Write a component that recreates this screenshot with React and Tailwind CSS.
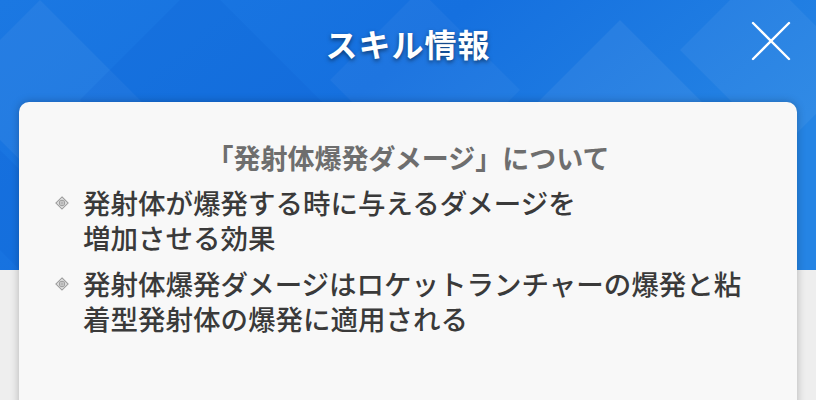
import React from "react";

const font = { fontFamily: '"Noto Sans CJK JP", "Noto Sans", sans-serif' };

function BulletMark() {
  return (
    <svg width="14" height="14" viewBox="0 0 14 14" className="shrink-0">
      <path d="M7 1 L13 7 L7 13 L1 7 Z" fill="none" stroke="#a0a0a0" strokeWidth="1.2" />
      <circle cx="7" cy="7" r="2.6" fill="none" stroke="#a0a0a0" strokeWidth="1.1" />
      <path d="M7 3.5 V10.5 M3.5 7 H10.5" stroke="#a0a0a0" strokeWidth="1" />
    </svg>
  );
}

function HeaderPattern() {
  return (
    <svg className="absolute inset-0 h-full w-full" viewBox="0 0 816 270" preserveAspectRatio="none">
      <defs>
        <linearGradient id="bg" x1="0" y1="0" x2="1" y2="0.4">
          <stop offset="0" stopColor="#1b78e2" />
          <stop offset="0.5" stopColor="#1570df" />
          <stop offset="1" stopColor="#2584e4" />
        </linearGradient>
      </defs>
      <rect width="816" height="270" fill="url(#bg)" />
      <path d="M40 0 L150 110 L60 200 L-50 90 Z" fill="#ffffff" opacity="0.05" />
      <path d="M200 -20 L330 110 L210 230 L80 100 Z" fill="#0a5fd0" opacity="0.18" />
      <path d="M420 -10 L520 90 L430 180 L330 80 Z" fill="#ffffff" opacity="0.04" />
      <path d="M620 20 L720 120 L630 210 L530 110 Z" fill="#ffffff" opacity="0.06" />
      <path d="M760 -30 L860 70 L780 150 L680 50 Z" fill="#ffffff" opacity="0.05" />
      <path d="M0 150 L80 230 L30 280 L-50 200 Z" fill="#0a5fd0" opacity="0.2" />
    </svg>
  );
}

export default function App() {
  return (
    <div className="relative h-[400px] w-[816px] overflow-hidden bg-[#eeeeee]" style={font}>
      <div className="absolute left-0 top-0 h-[270px] w-full">
        <HeaderPattern />
      </div>

      <div className="relative flex flex-col">
        <div className="relative flex h-[102px] items-center justify-center pb-[16px]">
          <h1 className="text-[32px] font-bold tracking-[1px] text-white [text-shadow:0_2px_4px_rgba(0,0,0,0.5)]">
            スキル情報
          </h1>
          <button className="absolute right-[24px] top-[20px] flex h-[42px] w-[42px] items-center justify-center">
            <svg width="42" height="42" viewBox="0 0 42 42">
              <path d="M3 3 L39 39 M39 3 L3 39" stroke="#ffffff" strokeWidth="2.4" strokeLinecap="round" />
            </svg>
          </button>
        </div>

        <div className="mx-[19px] h-[320px] rounded-[10px] bg-[#f8f8f8] px-[40px] pt-[38px] shadow-[0_0_8px_rgba(0,0,0,0.25)]">
          <h2 className="text-center text-[27px] font-bold leading-[36px] text-[#6e6e6e]">
            「発射体爆発ダメージ」について
          </h2>
          <ul className="mt-[9px] flex flex-col gap-[11px] text-[27.5px] font-medium leading-[35px] text-[#3a3a3a]">
            <li className="flex items-start gap-[14px] -ml-[4px]">
              <span className="mt-[11px]"><BulletMark /></span>
              <span>
                発射体が爆発する時に与えるダメージを
                <br />
                増加させる効果
              </span>
            </li>
            <li className="flex items-start gap-[14px] -ml-[4px]">
              <span className="mt-[11px]"><BulletMark /></span>
              <span>
                発射体爆発ダメージはロケットランチャーの爆発と粘
                <br />
                着型発射体の爆発に適用される
              </span>
            </li>
          </ul>
        </div>
      </div>
    </div>
  );
}
